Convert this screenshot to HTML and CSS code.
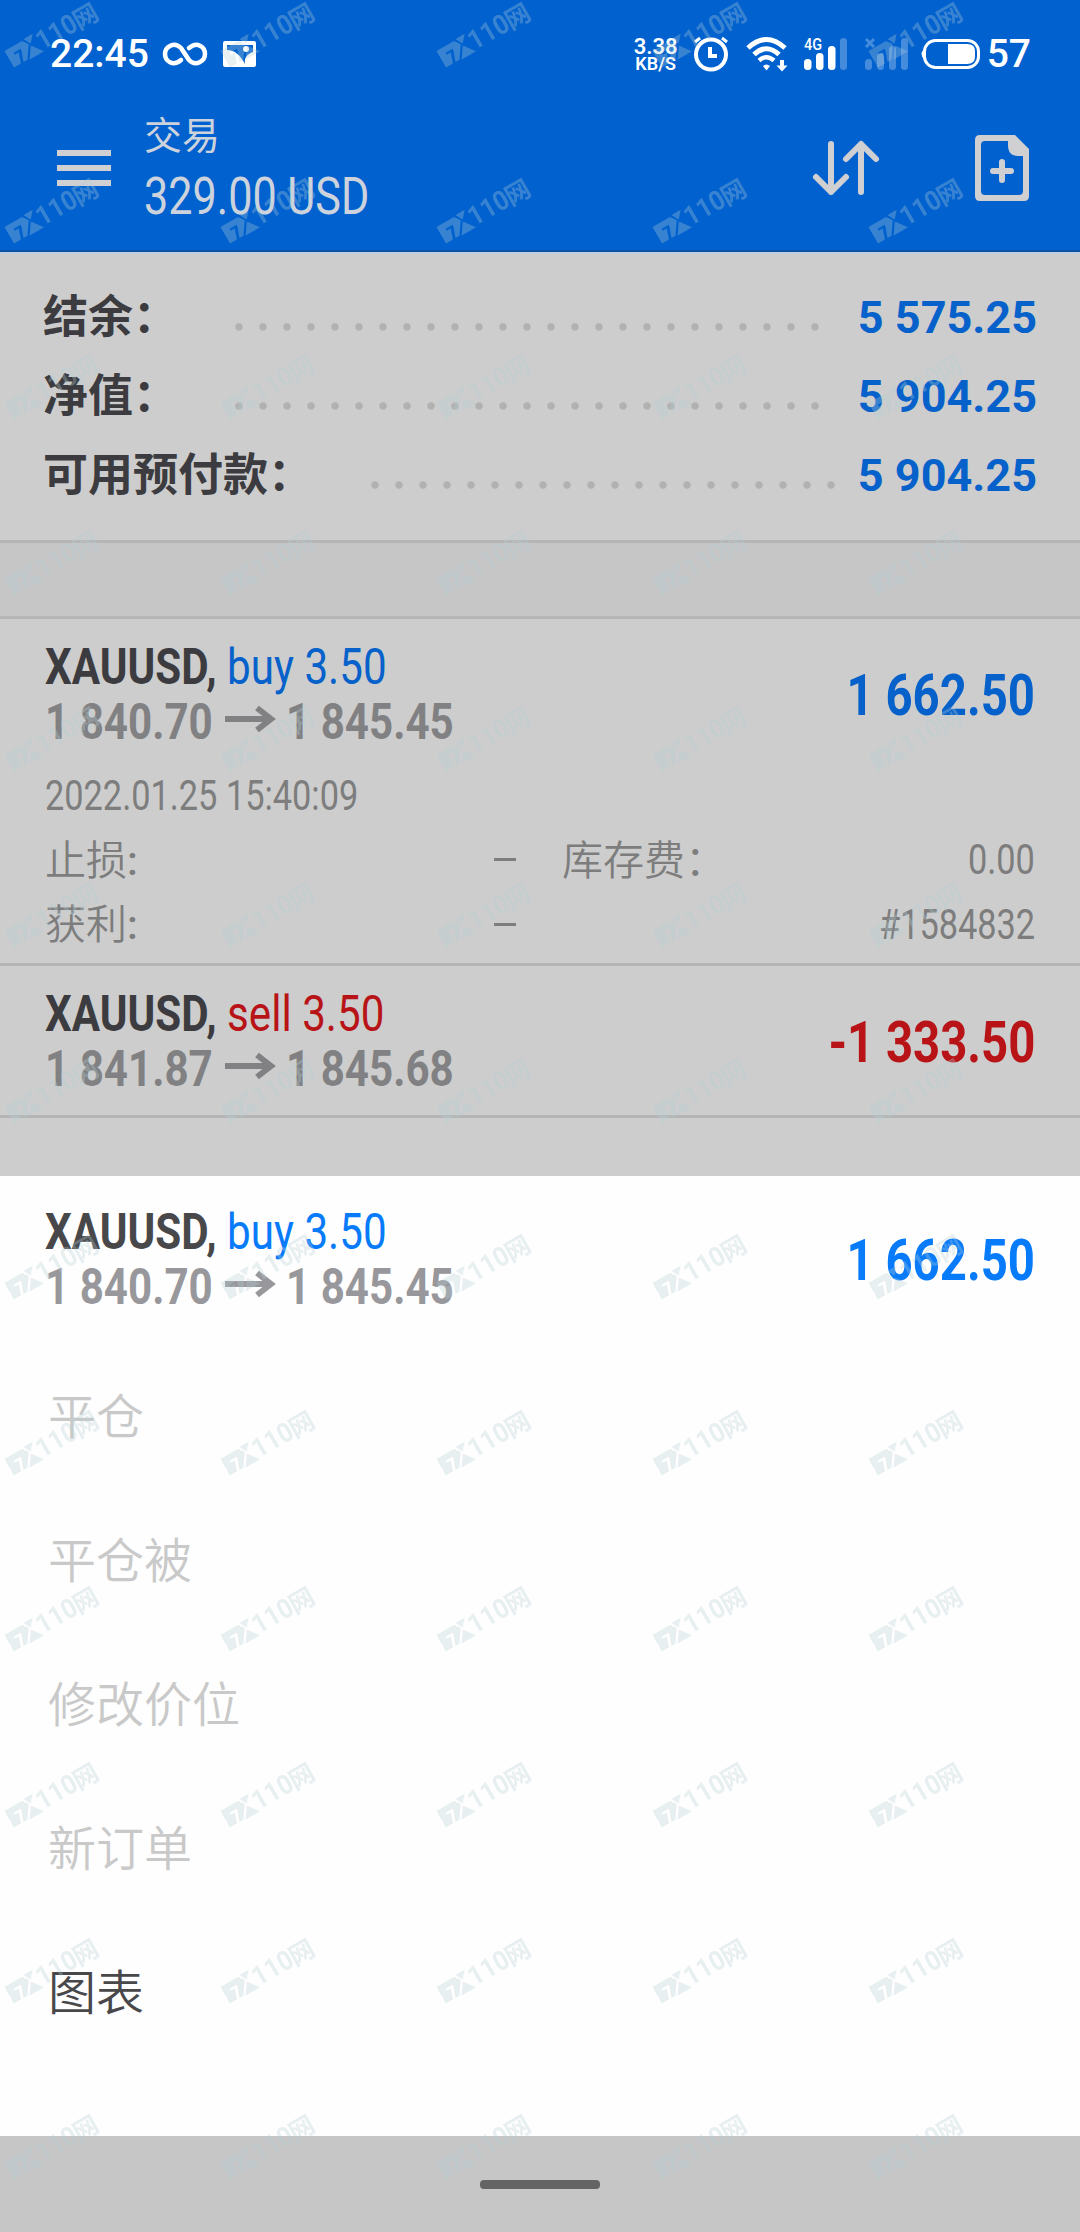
FILE: index.html
```html
<!DOCTYPE html>
<html lang="zh-CN">
<head>
  <meta charset="UTF-8" />
  <meta name="viewport" content="width=device-width, initial-scale=1.0" />
  <title>交易</title>
  <link rel="stylesheet" href="styles.css">
</head>
<body>
  <header class="header">
    <div class="status">
      <span class="clock">22:45</span>
      <svg class="infinity" width="46" height="24" viewBox="0 0 46 24"><path d="M19 18C11 25 3 19 3 12S12-1 19 6L27 18C34 25 43 19 43 12S35-1 27 6" fill="none" stroke="#fff" stroke-width="4.5" stroke-linecap="round"/></svg>
      <svg class="picture" width="34" height="27" viewBox="0 0 34 27"><path fill="#fff" fill-rule="evenodd" d="M2 0H31Q33 0 33 2V24Q33 26 31 26H2Q0 26 0 24V2Q0 0 2 0ZM4 4V9C12 9 17 14 22 23C21 17 24 13 30 11V4Z"/><circle cx="23" cy="8" r="3" fill="#fff"/></svg>
      <span class="speed"><b>3.38</b><i>KB/S</i></span>
      <svg class="alarm" width="36" height="36" viewBox="0 0 36 36" fill="none" stroke="#fff"><circle cx="18" cy="18.500" r="15" stroke-width="4"/><path d="M17 11V20H24" stroke-width="4"/><path d="M2 6L7 2M29 2L34 6" stroke-width="3"/></svg>
      <svg class="wifi" width="42" height="36" viewBox="0 0 42 36" fill="none" stroke="#fff"><path d="M2 12Q20.500-5 39 12" stroke-width="5"/><path d="M8 18.500Q20.500 7 33 18.500" stroke-width="5"/><path d="M13 24.500Q20.500 18 28 24.500" stroke-width="4.500"/><path d="M17 30Q20.500 27 24 30L20.500 34.500Z" fill="#fff" stroke="none"/><path d="M36 24V31" stroke-width="4"/><path d="M30.500 29.500H41.500L36 35.500Z" fill="#fff" stroke="none"/></svg>
      <svg class="signal" width="44" height="34" viewBox="0 0 44 34" fill="#fff"><text x="0" y="13" textLength="18" lengthAdjust="spacingAndGlyphs">4G</text><rect x="0" y="22" width="7.500" height="11" rx="3.500"/><rect x="12" y="16" width="7.500" height="17" rx="3.500"/><rect x="24" y="9" width="7.500" height="24" rx="3.500"/><rect x="36" y="1" width="7" height="32" rx="3.500" opacity=".27"/></svg>
      <svg class="nosim" width="44" height="34" viewBox="0 0 44 34" fill="#fff" opacity=".27"><path d="M1 2L9 10M9 2L1 10" stroke="#fff" stroke-width="3"/><rect x="0" y="22" width="7" height="11" rx="3.500"/><rect x="12" y="16" width="7" height="17" rx="3.500"/><rect x="24" y="9" width="7" height="24" rx="3.500"/><rect x="36" y="1" width="7" height="32" rx="3.500"/></svg>
      <svg class="battery" width="61" height="32" viewBox="0 0 61 32"><rect x="4.500" y="2.500" width="54" height="27" rx="11" fill="none" stroke="#fff" stroke-width="3"/><path d="M4 11Q-1 16 4 21Z" fill="#fff"/><path d="M28 6H47Q55 6 55 13V19Q55 26 47 26H28Z" fill="#fff"/></svg>
      <span class="percent">57</span>
    </div>
    <div class="toolbar">
      <div class="burger"><span></span><span></span><span></span></div>
      <div class="heading">
        <h1>交易</h1>
        <p>329.00 USD</p>
      </div>
      <svg class="sort" width="68" height="60" viewBox="0 0 68 60" fill="none" stroke="#d0d0d3" stroke-width="6" stroke-linecap="round" stroke-linejoin="round"><path d="M19 6V54M4 39L19 54L34 39"/><path d="M49 54V6M34 21L49 6L64 21"/></svg>
      <svg class="add" width="54" height="66" viewBox="0 0 54 66"><path fill="#d0d0d3" fill-rule="evenodd" d="M5 0H40L54 14V61Q54 66 49 66H5Q0 66 0 61V5Q0 0 5 0ZM10 6Q6 6 6 10V56Q6 60 10 60H44Q48 60 48 56V21H43Q33 21 33 10V6Z"/><path d="M18 36H36M27 27V45" stroke="#d0d0d3" stroke-width="6" stroke-linecap="round"/></svg>
    </div>
  </header>

  <section class="summary">
    <div class="total"><span class="label">结余：</span><span class="dots"></span><span class="sum">5 575.25</span></div>
    <div class="total"><span class="label">净值：</span><span class="dots"></span><span class="sum">5 904.25</span></div>
    <div class="total"><span class="label">可用预付款：</span><span class="dots short"></span><span class="sum">5 904.25</span></div>
  </section>
  <div class="band"></div>

  <main class="positions">
    <article class="position">
      <div class="head">
        <div>
          <div class="symbol"><b>XAUUSD,</b> <span class="buy">buy 3.50</span></div>
          <div class="prices"><span>1 840.70</span><svg width="50" height="28" viewBox="0 0 50 28"><path d="M0 14H46M32 3L46 14L32 25" fill="none" stroke="currentColor" stroke-width="6"/></svg><span>1 845.45</span></div>
        </div>
        <div class="profit buy">1 662.50</div>
      </div>
      <div class="details">
        <div class="row"><span class="num">2022.01.25 15:40:09</span></div>
        <div class="row"><span class="cn">止损<em>:</em></span><span class="none"></span><span class="cn swap">库存费：</span><span class="num right">0.00</span></div>
        <div class="row"><span class="cn">获利<em>:</em></span><span class="none"></span><span class="num right">#1584832</span></div>
      </div>
    </article>
    <article class="position">
      <div class="head">
        <div>
          <div class="symbol"><b>XAUUSD,</b> <span class="sell">sell 3.50</span></div>
          <div class="prices"><span>1 841.87</span><svg width="50" height="28" viewBox="0 0 50 28"><path d="M0 14H46M32 3L46 14L32 25" fill="none" stroke="currentColor" stroke-width="6"/></svg><span>1 845.68</span></div>
        </div>
        <div class="profit sell">-1 333.50</div>
      </div>
    </article>
  </main>

  <div class="sheet">
    <div class="head">
      <div>
        <div class="symbol"><b>XAUUSD,</b> <span class="buy">buy 3.50</span></div>
        <div class="prices"><span>1 840.70</span><svg width="50" height="28" viewBox="0 0 50 28"><path d="M0 14H46M32 3L46 14L32 25" fill="none" stroke="currentColor" stroke-width="6"/></svg><span>1 845.45</span></div>
      </div>
      <div class="profit buy">1 662.50</div>
    </div>
    <ul class="menu">
      <li>平仓</li>
      <li>平仓被</li>
      <li>修改价位</li>
      <li>新订单</li>
      <li class="active">图表</li>
    </ul>
  </div>

  <footer class="navbar"><span></span></footer>

  <!-- repeated brand mark over the whole page -->
  <svg class="watermark" width="1080" height="2232">
    <defs>
      <pattern id="mark" width="216" height="176" patternUnits="userSpaceOnUse">
        <g transform="translate(4.500 51) rotate(-30)" fill="#b4ced5">
          <path fill-rule="evenodd" d="M0 0H20L24.500 6L15.500 19H0ZM7 6V8.500H11.500L8 19H11L15 8V6Z"/>
          <path d="M22.500-1H33L26.500 6.500ZM25.500 8.500L34 20H17.500Z"/>
          <text class="mark-num" x="33" y="18.500" textLength="43" lengthAdjust="spacingAndGlyphs">110</text>
          <text class="mark-cn" x="75" y="19.500">网</text>
        </g>
      </pattern>
    </defs>
    <rect width="1080" height="2232" fill="url(#mark)" opacity=".31"/>
  </svg>
</body>
</html>
```
FILE: styles.css
```css
* {
  box-sizing: border-box;
}

body {
  margin: 0;
  width: 1080px;
  height: 2232px;
  position: relative;
  display: flex;
  flex-direction: column;
  overflow: hidden;
  background: #cdcdcd;
  color: #3c3c40;
  font-family: Roboto, "Noto Sans CJK SC", sans-serif;
}

svg {
  display: block;
  flex: none;
  overflow: visible;
}

/* header */
.header {
  height: 254px;
  background: #0061cf;
  border-bottom: 2px solid #bfcfe4;
  box-shadow: inset 0 -2px 0 #0c529f;
  color: #fff;
}

.status {
  height: 96px;
  padding: 12px 49px 0 50px;
  display: flex;
  align-items: center;
}

.clock,
.percent {
  font-size: 39px;
  font-weight: 500;
  line-height: 40px;
}

.clock {
  width: 112px;
}

.picture {
  margin-left: 15px;
}

.speed {
  width: 44px;
  margin-left: auto;
  margin-right: 15px;
  padding-top: 2px;
  text-align: center;
}

.speed b,
.speed i {
  display: block;
  font-style: normal;
  font-weight: 600;
}

.speed b {
  font-size: 22px;
  line-height: 17px;
}

.speed i {
  font-size: 18px;
  line-height: 18px;
}

.wifi {
  margin: 0 16px 0 17px;
}

.signal text {
  font-size: 16px;
  font-weight: 500;
}

.nosim {
  margin: 0 11px 0 17px;
}

.percent {
  margin-left: 6px;
}

.toolbar {
  height: 144px;
  padding: 0 51px 0 57px;
  display: flex;
  align-items: center;
}

.burger {
  width: 54px;
  display: flex;
  flex-direction: column;
  gap: 9px;
}

.burger span {
  height: 6px;
  background: #d0d0d3;
}

.heading {
  width: 260px;
  margin-left: 33px;
  padding-bottom: 6px;
  color: #cdd3dc;
}

.heading h1,
.heading p {
  margin: 0;
  font-weight: 400;
  line-height: 64px;
}

.heading h1 {
  font-family: "Noto Sans CJK SC", sans-serif;
  font-size: 38px;
}

.heading p {
  font-size: 52px;
  white-space: nowrap;
  transform: scaleX(.83);
  transform-origin: left;
}

.sort {
  margin-left: auto;
  margin-right: 95px;
}

/* account totals */
.summary {
  height: 289px;
  padding: 19px 43px 0;
  border-bottom: 3px solid #b5b5b5;
}

.total {
  height: 79px;
  display: flex;
  align-items: center;
}

.label {
  padding-top: 1px;
  font-family: "Noto Sans CJK SC", sans-serif;
  font-size: 45px;
  font-weight: 700;
  line-height: 79px;
}

.dots {
  width: 600px;
  height: 8px;
  margin: 29px 0 0 49px;
  background: radial-gradient(circle, #b1b1b1 3px, transparent 4.5px) 0 0 / 24px 8px repeat-x;
}

.dots.short {
  width: 480px;
  margin-left: 50px;
}

.sum {
  margin-left: auto;
  padding-top: 9px;
  color: #0661ca;
  font-size: 45px;
  font-weight: 700;
}

.band {
  height: 73px;
  background: #c6c6c6;
}

/* positions */
.positions {
  border-top: 3px solid #b5b5b5;
}

.position {
  padding-top: 21px;
  border-bottom: 3px solid #b5b5b5;
}

.position:first-child {
  height: 347px;
}

.position:last-child {
  height: 152px;
}

.head {
  padding: 0 45px;
  display: flex;
  justify-content: space-between;
  align-items: center;
}

.symbol,
.prices {
  height: 55px;
  font-size: 50px;
  line-height: 55px;
  white-space: nowrap;
}

.symbol {
  transform: scaleX(.843);
  transform-origin: left;
}

.prices {
  display: flex;
  align-items: center;
  color: #818183;
  font-weight: 700;
}

.prices span {
  width: 180px;
  transform: scaleX(.843);
  transform-origin: left;
}

.prices svg {
  margin: 0 11px 7px 0;
}

.profit {
  font-size: 57px;
  font-weight: 700;
  white-space: nowrap;
  transform: scaleX(.83);
  transform-origin: right;
}

.buy {
  color: #0661ca;
}

.sell {
  color: #b81417;
}

.details {
  padding: 13px 45px 0;
  color: #7d7d7d;
  font-size: 42px;
}

.row {
  height: 64.5px;
  display: flex;
  align-items: center;
}

.num {
  white-space: nowrap;
  transform: scaleX(.817);
  transform-origin: left;
}

.num.right {
  margin-left: auto;
  transform-origin: right;
}

.cn {
  width: 449px;
  padding-bottom: 1px;
  font-family: "Noto Sans CJK SC", sans-serif;
  font-size: 41px;
  font-weight: 350;
  line-height: 61px;
}

.cn em {
  font-family: Roboto, sans-serif;
  font-style: normal;
  font-weight: 500;
}

.none {
  width: 22px;
  height: 3px;
  background: #7d7d7d;
}

.swap {
  width: auto;
  margin-left: 46px;
  padding-bottom: 4px;
}

/* bottom sheet */
.sheet {
  height: 960px;
  margin-top: 58px;
  padding-top: 29px;
  background: #fefefe;
  color: #48484b;
}

.sheet .buy {
  color: #087bfa;
}

.sheet .prices {
  color: #98989c;
}

.menu {
  margin: 26px 0 0;
  padding: 0 48px;
  list-style: none;
  color: #c9c9c9;
  font-family: "Noto Sans CJK SC", sans-serif;
  font-size: 48px;
  font-weight: 350;
  line-height: 144px;
}

.menu .active {
  color: #48484b;
}

.navbar {
  height: 96px;
  display: flex;
  justify-content: center;
  align-items: center;
  background: #c6c6c6;
}

.navbar span {
  width: 120px;
  height: 9px;
  border-radius: 4px;
  background: #646464;
}

.watermark {
  position: absolute;
  top: 0;
  left: 0;
  pointer-events: none;
}

.mark-num {
  font-size: 27px;
  font-weight: 700;
}

.mark-cn {
  font-family: "Noto Sans CJK SC", sans-serif;
  font-size: 25px;
  font-weight: 700;
}
```
